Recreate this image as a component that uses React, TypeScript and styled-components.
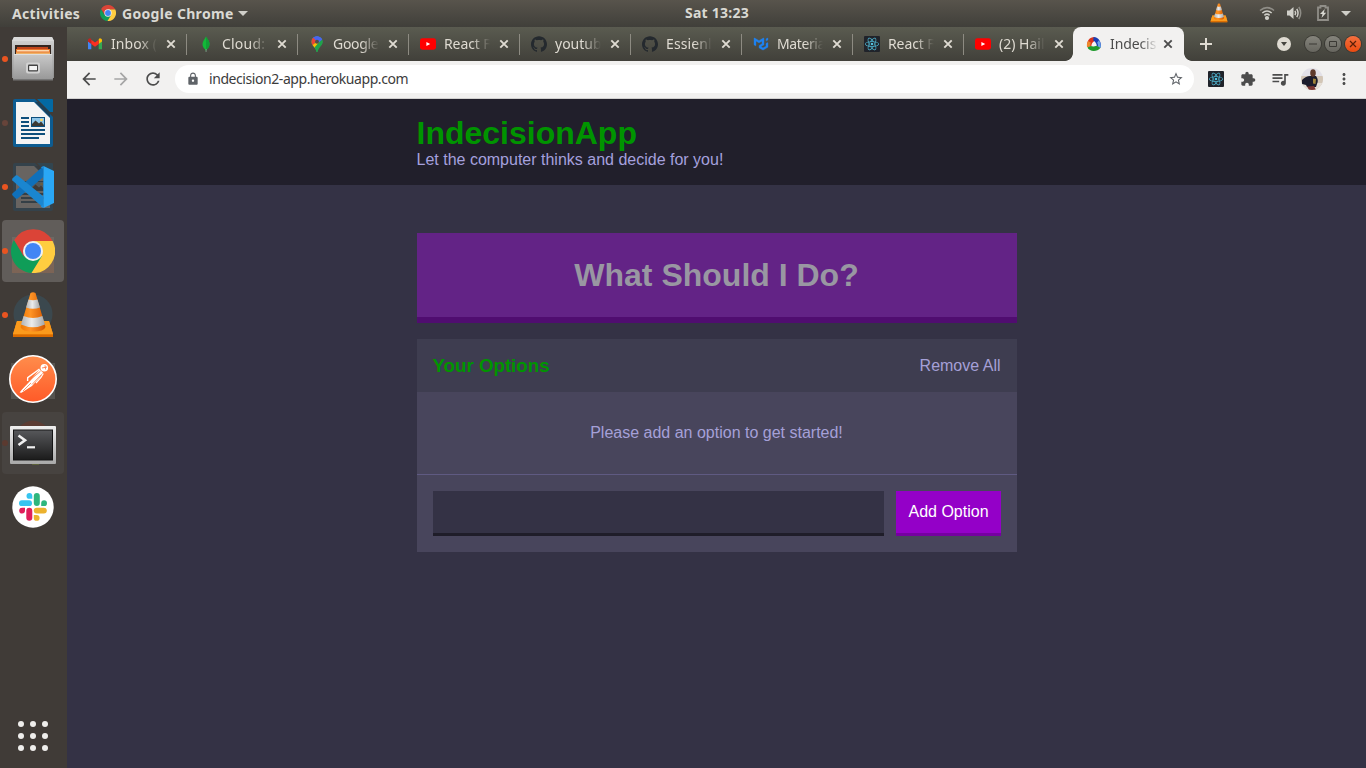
import React from "react";
import styled, { createGlobalStyle } from "styled-components";
import {
  MdArrowBack,
  MdArrowForward,
  MdRefresh,
  MdLock,
  MdStarBorder,
  MdExtension,
  MdQueueMusic,
  MdMoreVert,
} from "react-icons/md";
import { SiMui, SiGithub, SiReact } from "react-icons/si";

const GlobalStyle = createGlobalStyle`
  * { box-sizing: border-box; }
  html, body { margin: 0; padding: 0; }
  body { overflow: hidden; background: #403b37; }
  svg { display: block; flex: none; }
`;

const uiFont = `"Noto Sans", "Open Sans", sans-serif`;
const pageFont = `"Liberation Sans", Arial, sans-serif`;

const Desktop = styled.div`
  width: 1366px;
  height: 768px;
  display: flex;
  flex-direction: column;
  background: #403b37;
  font-family: ${uiFont};
`;

/* ---------- system bar ---------- */

const TopBar = styled.header`
  flex: none;
  height: 27px;
  display: grid;
  grid-template-columns: 600px 234px 1fr;
  align-items: center;
  background: linear-gradient(#58544c, #403f3a);
  color: #dad9d3;
  font-size: 14px;
  font-weight: 700;
`;

const TopGroup = styled.div`
  display: flex;
  align-items: center;
  height: 27px;
  padding-bottom: 1px;
  white-space: nowrap;
`;

const TopLeft = styled(TopGroup)`
  padding-left: 12px;
`;

const TopClock = styled(TopGroup)`
  justify-content: center;
  padding-bottom: 2px;
  letter-spacing: 0.25px;
`;

const TopRight = styled(TopGroup)`
  justify-content: flex-end;
  padding-right: 15px;
`;

const TopLabel = styled.span<{ $w: number }>`
  width: ${(p) => p.$w}px;
  letter-spacing: 0.32px;
`;

const Spacer = styled.span<{ $w: number }>`
  flex: none;
  width: ${(p) => p.$w}px;
`;

const Caret = styled.span`
  border-left: 5px solid transparent;
  border-right: 5px solid transparent;
  border-top: 5px solid #d0cfc9;
`;

/* ---------- dock ---------- */

const Body = styled.div`
  flex: 1;
  min-height: 0;
  display: flex;
`;

const Dock = styled.nav`
  flex: none;
  width: 67px;
  padding: 1px 3px 17px 2px;
  display: flex;
  flex-direction: column;
  gap: 2px;
  background: #403b37;
`;

const DockItem = styled.div<{ $bg?: string; $dot?: string }>`
  position: relative;
  flex: none;
  width: 62px;
  height: 62px;
  border-radius: 4px;
  display: flex;
  align-items: center;
  justify-content: center;
  background: ${(p) => p.$bg ?? "transparent"};
  &::before {
    content: "";
    position: absolute;
    left: 0;
    top: 28px;
    width: 6px;
    height: 6px;
    border-radius: 50%;
    background: ${(p) => p.$dot ?? "transparent"};
  }
  svg { position: relative; }
`;

const AppGrid = styled.div`
  margin: auto 0 0 16px;
  display: grid;
  grid-template-columns: repeat(3, 6px);
  gap: 6px;
`;

const GridDot = styled.i`
  height: 6px;
  border-radius: 50%;
  background: #efeeec;
`;

/* ---------- browser ---------- */

const Browser = styled.main`
  flex: 1;
  min-width: 0;
  display: flex;
  flex-direction: column;
`;

const TabStrip = styled.div`
  flex: none;
  height: 34px;
  padding: 0 5px 0 9px;
  display: flex;
  align-items: center;
  background: linear-gradient(#5a5b50, #41403a);
`;

const Tab = styled.div`
  flex: none;
  position: relative;
  width: 111px;
  height: 34px;
  padding: 0 8px 0 11px;
  display: flex;
  align-items: center;
  color: #dfdbd2;
  &::after {
    content: "";
    position: absolute;
    right: 0;
    top: 7px;
    width: 1px;
    height: 21px;
    background: #8d8b82;
  }
  &.last::after { display: none; }
`;

const ActiveTab = styled(Tab)`
  margin-left: -2px;
  padding-left: 13px;
  background: #f2f1f0;
  color: #4c4c4c;
  border-radius: 8px 8px 0 0;
  &::before {
    content: "";
    position: absolute;
    left: -8px;
    bottom: 0;
    width: 8px;
    height: 8px;
    background: radial-gradient(circle at 0 0, transparent 7.5px, #f2f1f0 8.2px);
  }
  &::after {
    right: -8px;
    top: auto;
    bottom: 0;
    width: 8px;
    height: 8px;
    background: radial-gradient(circle at 100% 0, transparent 7.5px, #f2f1f0 8.2px);
  }
`;

const TabTitle = styled.span<{ $w: number; $ls: number; $gap?: number }>`
  flex: none;
  width: ${(p) => p.$w}px;
  margin: 0 ${(p) => p.$gap ?? 6}px 0 8px;
  overflow: hidden;
  white-space: nowrap;
  font-size: 14px;
  line-height: 20px;
  letter-spacing: ${(p) => p.$ls}px;
  mask-image: linear-gradient(90deg, #000 calc(100% - 18px), transparent);
`;

const WindowButton = styled.span<{ $close?: boolean }>`
  flex: none;
  width: 16px;
  height: 16px;
  margin-left: 4px;
  border-radius: 50%;
  display: flex;
  align-items: center;
  justify-content: center;
  background: ${(p) =>
    p.$close ? "linear-gradient(#f4703f, #ec4a0f)" : "linear-gradient(#85847c, #67665f)"};
  box-shadow: 0 0 0 1px #3a3934;
`;

const TabSearch = styled.span`
  margin-left: auto;
  margin-right: 10px;
  width: 14px;
  height: 14px;
  border-radius: 50%;
  display: flex;
  align-items: center;
  justify-content: center;
  background: #dfdbd2;
  &::after {
    content: "";
    border-left: 3px solid transparent;
    border-right: 3px solid transparent;
    border-top: 4px solid #45443e;
  }
`;

const NewTab = styled.span`
  margin-left: 15px;
`;

const Toolbar = styled.div`
  flex: none;
  height: 38px;
  padding: 0 12px 1px 12px;
  display: flex;
  align-items: center;
  background: #f2f1f0;
  border-bottom: 1px solid #d2d1d0;
  color: #4c4c4c;
`;

const NavIcons = styled.div`
  flex: none;
  display: flex;
  gap: 12px;
  width: 96px;
  svg:nth-child(2) { color: #a5a5a5; }
`;

const Omnibox = styled.div`
  flex: none;
  width: 1019px;
  height: 28px;
  padding: 0 10px 0 11px;
  border-radius: 14px;
  display: flex;
  align-items: center;
  background: #fff;
  color: #5f6368;
`;

const Url = styled.span`
  flex: 1;
  margin-left: 9px;
  font-size: 14px;
  line-height: 20px;
  letter-spacing: -0.43px;
  color: #3c3c3c;
`;

const Extensions = styled.div`
  flex: none;
  display: flex;
  align-items: center;
  margin-left: 14px;
`;

const ReactTile = styled.span`
  flex: none;
  width: 16px;
  height: 16px;
  border-radius: 1px;
  display: flex;
  align-items: center;
  justify-content: center;
  background: #20232a;
  color: #53c1de;
`;

/* ---------- page ---------- */

const Page = styled.section`
  flex: 1;
  background: #343245;
  font-family: ${pageFont};
  font-size: 16px;
  line-height: 18px;
  color: #a5a0d8;
`;

const Container = styled.div`
  width: 600px;
  margin: 0 auto;
`;

const PageHeader = styled.div`
  height: 86px;
  padding: 16px 0;
  margin-bottom: 48px;
  background: #211f2b;
  color: #a5a0de;
`;

const Title = styled.h1`
  margin: 0;
  font-size: 32px;
  line-height: 36px;
  color: #009400;
`;

const Subtitle = styled.h2`
  margin: 0;
  font-size: 16px;
  font-weight: 400;
  line-height: 18px;
`;

const BigButton = styled.button`
  display: block;
  width: 100%;
  height: 90px;
  margin: 0 0 16px;
  padding: 24px;
  border: none;
  border-bottom: 6px solid #500d70;
  background: #632386;
  color: #9997a2;
  font: 700 32px/36px ${pageFont};
`;

const Widget = styled.div`
  background: #48455c;
`;

const WidgetHeader = styled.div`
  height: 53px;
  padding: 0 16px;
  display: flex;
  align-items: center;
  justify-content: space-between;
  background: #3e3d50;
`;

const WidgetTitle = styled.h3`
  margin: 0;
  font-size: 18.72px;
  line-height: 21px;
  color: #009400;
`;

const LinkButton = styled.button`
  padding: 0;
  border: none;
  background: none;
  color: #a5a0d8;
  font: 16px/18px ${pageFont};
`;

const Message = styled.p`
  margin: 0;
  padding: 32px 0;
  border-bottom: 1px solid #5f5a82;
  text-align: center;
`;

const Form = styled.form`
  display: flex;
  gap: 12px;
  padding: 16px;
`;

const Field = styled.input`
  flex: 1;
  min-width: 0;
  height: 45px;
  border: none;
  border-bottom: 3px solid #1f1d29;
  border-radius: 0;
  background: #343245;
`;

const AddButton = styled.button`
  flex: none;
  width: 105px;
  height: 45px;
  padding: 0 0 1px 1px;
  border: none;
  border-bottom: 3px solid #7500a0;
  background: #9400c8;
  color: #fff;
  font: 16px/18px ${pageFont};
  white-space: nowrap;
`;

/* ---------- drawings ---------- */

const ChromeLogo = ({ size }: { size: number }) => (
  <svg width={size} height={size} viewBox="0 0 44 44">
    <path d="M22 22 12.5 27.5 2.95 11A22 22 0 0 0 20.5 44L31.5 27.5Z" fill="#0f9d58" />
    <path d="M22 12H41.6A22 22 0 0 1 20.5 44L30.8 27.3Z" fill="#ffcd40" />
    <path d="M3.2 11A22 22 0 0 1 41.6 12H22L12.8 27Z" fill="#db4437" />
    <circle cx="22" cy="22" r="10" fill="#f1f1f1" />
    <circle cx="22" cy="22" r="8" fill="#4285f4" />
  </svg>
);

const ChromeDockIcon = styled.div`
  position: relative;
  display: flex;
  background: linear-gradient(#6e6963, #7d6455) center bottom / 42px 36px no-repeat;
`;

const Cone = ({ size, ghost }: { size: number; ghost?: boolean }) => (
  <svg width={size} height={size} viewBox="0 0 48 48">
    <defs>
      <linearGradient id={`cone${size}`}>
        <stop offset="0" stopColor="#f07800" />
        <stop offset=".4" stopColor="#ff9426" />
        <stop offset="1" stopColor="#d05500" />
      </linearGradient>
      <linearGradient id={`band${size}`}>
        <stop offset="0" stopColor="#b0b2b3" />
        <stop offset=".45" stopColor="#ececec" />
        <stop offset="1" stopColor="#a3a5a6" />
      </linearGradient>
    </defs>
    {ghost && <circle cx="24" cy="23" r="19.5" fill="#3b484e" />}
    <path d="M8 30H40L44 43V46H4V43Z" fill="#f58a0b" />
    <path d="M8 30H40L44 43H4Z" fill="#fb9a1c" />
    <path d="M4 43.5H44V46H4Z" fill="#d96a00" />
    <path d="M21.5 2Q24 .4 26.5 2L36.5 36Q35 40.5 24 40.5T11.5 36Z" fill={`url(#cone${size})`} />
    <path d="M19.5 8.5Q24 10 28.5 8.5L31 16.6Q24 19 17 16.6Z" fill={`url(#band${size})`} />
    <path d="M14.6 25Q24 29 33.4 25L36 33.5Q24 39 12 33.5Z" fill={`url(#band${size})`} />
  </svg>
);

const FilesIcon = () => (
  <svg width="48" height="48" viewBox="0 0 48 48">
    <defs>
      <linearGradient id="cab" x2="0" y2="1">
        <stop offset="0" stopColor="#d5d5d5" />
        <stop offset="1" stopColor="#8f8f8f" />
      </linearGradient>
      <linearGradient id="drawer" x2="0" y2="1">
        <stop offset="0" stopColor="#c9c9c9" />
        <stop offset="1" stopColor="#979797" />
      </linearGradient>
    </defs>
    <path d="M5 2H43L45 6V43H3V6Z" fill="url(#cab)" />
    <path d="M5 2H43L45 6H3Z" fill="#dadada" />
    <path d="M6 10H42V22H6Z" fill="#35261f" />
    <path d="M8 12H39V16H8Z" fill="#c0451a" />
    <path d="M7 14H41V19H7Z" fill="#e8742a" />
    <path d="M8 15.2H40V16.4H8Z" fill="#fff0d0" />
    <path d="M7 17.5H41V19H7Z" fill="#f0b268" />
    <path d="M5 19H43L44 45H4Z" fill="url(#drawer)" />
    <path d="M5 19H43V20H5Z" fill="#dedede" />
    <path d="M4 44H44V45.5H4Z" fill="#777" />
    <rect x="17" y="27.5" width="14" height="11" rx="2" fill="#d2d2d2" />
    <rect x="19" y="29.5" width="10" height="7" rx="1" fill="#444" />
    <rect x="20.2" y="31" width="7.8" height="4.2" fill="#f4f4f4" />
  </svg>
);

const WriterShape = () => (
  <>
    <path d="M6 0H26L44 18V46Q44 48 42 48H6Q4 48 4 46V2Q4 0 6 0Z" fill="#0d5c91" />
    <path d="M28 0H43Q44 0 44 1V13H41Z" fill="#0369a3" />
    <path d="M7 3H25L41 19V45H7Z" fill="#f4f4f4" />
    <path d="M26 3 41 18V14L30 3Z" fill="#1d3f57" />
    <g fill="#0d4f7c">
      <path d="M12 18H20V20H12ZM12 22H20V24H12ZM12 26H20V28H12ZM12 30H36V32H12ZM12 34H36V36H12ZM12 38H30V40H12Z" />
      <path d="M22 18H36V28H22Z" />
    </g>
    <path d="M23 19H35V27H23Z" fill="#8fc6e8" />
    <path d="M23 27V25L26.5 21.5 30 24.5 32 22.5 35 26V27Z" fill="#3d3a34" />
    <circle cx="32.5" cy="21" r="1.3" fill="#ffd75e" />
  </>
);

const WriterIcon = () => (
  <svg width="48" height="48" viewBox="0 0 48 48">
    <WriterShape />
  </svg>
);

const CodeIcon = () => (
  <svg width="48" height="48" viewBox="0 0 48 48">
    <g opacity=".22">
      <WriterShape />
    </g>
    <path d="M3.4 30.6 34.5 3V14L8.6 35.6Q7.4 36.2 6.6 35.4L3.4 32.2Q2.8 31.4 3.4 30.6Z" fill="#0f70ba" />
    <path d="M3.4 17.4Q2.8 16.4 3.4 15.6L6.6 12.6Q7.5 12 8.6 12.6L34.5 33.5V45Z" fill="#1a86d0" />
    <path d="M34.5 3 45 8V40L34.5 45Z" fill="#2aa7f5" />
    <path d="M34.5 3V45L31.5 43.4Q34 43 34 41V6.5Q34 4.8 31.5 4.6Z" fill="#1d8fe0" />
  </svg>
);

const PostmanIcon = () => (
  <svg width="48" height="48" viewBox="0 0 48 48">
    <defs>
      <linearGradient id="pm" x2="0" y2="1">
        <stop offset="0" stopColor="#ff8d4c" />
        <stop offset="1" stopColor="#ff5a28" />
      </linearGradient>
    </defs>
    <path d="M2 8H46V44H2Z" fill="#56534f" />
    <circle cx="24" cy="24" r="23.2" fill="url(#pm)" stroke="#fff" strokeWidth="1.6" />
    <circle cx="35.3" cy="12.7" r="3.8" fill="#fff" />
    <path d="M33 13 38 12M36 10.3 36.6 14.5" stroke="#ff6c37" strokeWidth=".8" />
    <path d="M30.5 14.5 34 17.5 31 22 23 31 12.5 37.8 10.6 37.4 13 34.5 21.5 25.5Z" fill="#fff" />
    <path d="M30.5 14 18.7 22.6 18.6 26" stroke="#fff" strokeWidth="1.4" fill="none" />
    <path d="M34.3 18.5 32 22.5 27 28" stroke="#fff" strokeWidth="1.2" fill="none" />
    <path d="M20.5 25.5 31.5 16.2M23 29.5 32.5 19.5M14 36 22 28" stroke="#ff7840" strokeWidth=".8" />
  </svg>
);

const TerminalIcon = () => (
  <svg width="48" height="48" viewBox="0 0 48 48">
    <defs>
      <linearGradient id="tm" x2="0" y2="1">
        <stop offset="0" stopColor="#56575a" />
        <stop offset="1" stopColor="#1c1c1c" />
      </linearGradient>
      <linearGradient id="tf" x2="0" y2="1">
        <stop offset="0" stopColor="#efefef" />
        <stop offset="1" stopColor="#a9a9a9" />
      </linearGradient>
    </defs>
    <path d="M10 8Q24-5 38 8Z" fill="#5c3c33" />
    <path d="M23 44H30V46H23Z" fill="#5b6138" />
    <rect x="1" y="7" width="46" height="38" rx="1" fill="url(#tf)" />
    <rect x="4" y="10.5" width="40" height="31" fill="#151515" />
    <rect x="5" y="11.5" width="38" height="29" fill="url(#tm)" />
    <path d="M9.5 16.5 16 21.2 9.5 26" fill="none" stroke="#f0f0f0" strokeWidth="2.6" />
    <path d="M18 27.2H26V29.4H18Z" fill="#f0f0f0" />
  </svg>
);

const SlackIcon = () => (
  <svg width="48" height="48" viewBox="0 0 48 48">
    <circle cx="24" cy="24" r="20.7" fill="#fff" />
    <g fill="#36c5f0">
      <rect x="10" y="17.3" width="13" height="5.8" rx="2.9" />
      <path d="M23.3 15.8H20.4A2.9 2.9 0 1 1 23.3 12.9Z" />
    </g>
    <g fill="#2eb67d">
      <rect x="24.8" y="10" width="6" height="13" rx="3" />
      <path d="M32.2 23.1V20.2A2.9 2.9 0 1 1 35.1 23.1Z" />
    </g>
    <g fill="#ecb22e">
      <rect x="24.8" y="24.7" width="13" height="5.8" rx="2.9" />
      <path d="M24.8 32H27.7A2.9 2.9 0 1 1 24.8 34.9Z" />
    </g>
    <g fill="#e01e5a">
      <rect x="17.3" y="24.7" width="6" height="13" rx="3" />
      <path d="M16 24.7V27.6A2.9 2.9 0 1 1 13 24.7Z" />
    </g>
  </svg>
);

const GmailIcon = () => (
  <svg width="16" height="16" viewBox="0 0 16 16">
    <path d="M1 5V13.2H4.3V7.5L1 5Z" fill="#4285f4" />
    <path d="M11.7 7.5V13.2H15V5Z" fill="#34a853" />
    <path d="M1 5.4V4A1.7 1.7 0 0 1 4.3 3.5V8Z" fill="#c5221f" />
    <path d="M15 5.4V4A1.7 1.7 0 0 0 11.7 3.5V8Z" fill="#fbbc04" />
    <path d="M4.3 3.8 8 6.6 11.7 3.8V7.9L8 10.7 4.3 7.9Z" fill="#ff2d20" />
  </svg>
);

const LeafIcon = () => (
  <svg width="16" height="16" viewBox="0 0 16 16">
    <path d="M8 .5C9 3 11.5 4.5 11.5 8.3C11.5 11 9.8 12.6 8.3 13.7L8 16 7.6 13.7C6 12.5 4.5 10.8 4.5 8.3C4.5 4.8 7 3 8 .5Z" fill="#13b838" />
    <path d="M8 .5C9 3 11.5 4.5 11.5 8.3C11.5 11 9.8 12.6 8.3 13.7H8Z" fill="#10a035" />
    <path d="M7.8 13H8.3V16H7.8Z" fill="#b8c4c2" />
  </svg>
);

const PinIcon = () => (
  <svg width="16" height="16" viewBox="0 0 16 16">
    <defs>
      <clipPath id="pin">
        <path d="M8 .2A5.6 5.6 0 0 1 13.6 5.8C13.6 9.5 9.6 10.8 8.7 15.2Q8 16.6 7.3 15.2C6.4 10.8 2.4 9.5 2.4 5.8A5.6 5.6 0 0 1 8 .2Z" />
      </clipPath>
    </defs>
    <g clipPath="url(#pin)">
      <path d="M0 0H16V16H0Z" fill="#34a853" />
      <path d="M0 0H16V1L8 6 4 3Z" fill="#4267f0" />
      <path d="M4 1.2 8 5 3 10 0 8V2Z" fill="#ea4335" />
      <path d="M8 5.5 2.5 10 6 13 12 6Z" fill="#fbbc04" />
      <path d="M13 3 4.5 12.5 8 17 16 8Z" fill="#1ea34c" />
      <path d="M4 1 8-1 14 3 9 7Z" fill="#4a64ef" />
    </g>
    <circle cx="8" cy="5.8" r="2" fill="#4f4e48" />
  </svg>
);

const YoutubeIcon = () => (
  <svg width="16" height="16" viewBox="0 0 16 16">
    <rect x="0" y="2.3" width="16" height="11.4" rx="2.4" fill="#f00" />
    <path d="M6.4 5.9 10.2 8 6.4 10.1Z" fill="#fff" />
  </svg>
);

const WheelIcon = () => (
  <svg width="16" height="16" viewBox="0 0 16 16">
    <path d="M8.5 1C3.5 1 .5 5 1 11L5.4 10.2Q5.4 6.5 8.5 5Z" fill="#d9341c" />
    <path d="M2 5Q.6 7.5 1 11L4.4 10Q4.2 8 4.8 6.4Z" fill="#f08a2c" />
    <path d="M7.6 1C13 1.5 15.5 6 15 11.5L10.8 10.6Q10.8 6.5 7.2 4.6Z" fill="#1a3fb4" />
    <path d="M13 4.2Q15.4 7 15 11.5L12 10.8Q12.2 8.7 11.2 6.6Z" fill="#6aa2e8" />
    <path d="M1.4 11.6C3.5 15.8 11 16.5 14.5 11.8L10.5 9.7Q7.5 11 4.8 10Z" fill="#1f9a2b" />
    <path d="M8 5.8 10.3 10H5.7Z" fill="#f4f2f6" />
  </svg>
);

const CloseIcon = () => (
  <svg width="16" height="16" viewBox="0 0 16 16" stroke="currentColor" strokeWidth="1.9">
    <path d="M4.3 4.3 11.7 11.7M11.7 4.3 4.3 11.7" />
  </svg>
);

const Avatar = () => (
  <svg width="22" height="22" viewBox="0 0 22 22">
    <defs>
      <clipPath id="av">
        <circle cx="11" cy="11" r="11" />
      </clipPath>
    </defs>
    <g clipPath="url(#av)">
      <path d="M0 0H22V22H0Z" fill="#e3e1e8" />
      <path d="M0 8H22V22H0Z" fill="#d3c6b6" />
      <path d="M0 15H22V22H0Z" fill="#e6e0d8" />
      <path d="M1 12Q5 8 9 8L15 8Q18 12 16 16L15 19H6L5 17 1 16Z" fill="#1c1c2c" />
      <path d="M12 10.5 15 11 14.5 16 12 15.5Z" fill="#a0843a" />
      <path d="M6 18.5 13 18 15 22H8Z" fill="#7a3632" />
      <ellipse cx="12" cy="5" rx="2.8" ry="3.8" fill="#5f3a2c" />
    </g>
  </svg>
);

const WifiIcon = () => (
  <svg width="16" height="16" viewBox="0 0 16 16" fill="none" stroke="#d0cfc9" strokeWidth="1.6">
    <path d="M1 5.5Q8-.2 15 5.5" stroke="#8f8d87" />
    <path d="M3.3 8Q8 4 12.7 8" />
    <path d="M5.4 10.3Q8 8.1 10.6 10.3" />
    <circle cx="8" cy="13" r="1.3" fill="#d0cfc9" />
  </svg>
);

const VolumeIcon = () => (
  <svg width="16" height="16" viewBox="0 0 16 16" fill="none" stroke="#d0cfc9" strokeWidth="1.5">
    <path d="M1 5.5H3.5L7.5 2V14L3.5 10.5H1Z" fill="#d0cfc9" stroke="none" />
    <path d="M9 5.8Q10.4 8 9 10.2M10.8 3.8Q13.3 8 10.8 12.2" />
    <path d="M12.8 2Q16.6 8 12.8 14" stroke="#8f8d87" />
  </svg>
);

const BatteryIcon = () => (
  <svg width="12" height="16" viewBox="0 0 12 16">
    <path d="M1 2.5H3.5V1H8.5V2.5H11V15H1Z" fill="none" stroke="#908e88" strokeWidth="1.8" />
    <path d="M7.8 4 3 9H5.5L4.5 13 9.2 7.8H6.8Z" fill="#dad9d3" />
  </svg>
);

const MuiIcon = styled(SiMui)`
  margin: 1px;
  color: #1f82f0;
  stroke: #1f82f0;
  stroke-width: 0.6px;
  overflow: visible;
`;

const tabs: { title: string; icon: React.ReactNode; ls?: number }[] = [
  { title: "Inbox (", icon: <GmailIcon />, ls: 0.1 },
  { title: "Cloud: ", icon: <LeafIcon />, ls: 0.2 },
  { title: "Google", icon: <PinIcon />, ls: -0.3 },
  { title: "React F", icon: <YoutubeIcon />, ls: -0.1 },
  { title: "youtub", icon: <SiGithub size={16} color="#24292e" /> },
  { title: "Essienl", icon: <SiGithub size={16} color="#24292e" />, ls: 0.1 },
  { title: "Materia", icon: <MuiIcon size={14} />, ls: -0.4 },
  { title: "React F", icon: <ReactTile><SiReact size={14} /></ReactTile>, ls: -0.1 },
  { title: "(2) Hail", icon: <YoutubeIcon /> },
];

export default function App() {
  return (
    <Desktop>
      <GlobalStyle />
      <TopBar>
        <TopLeft>
          <TopLabel $w={88}>Activities</TopLabel>
          <ChromeLogo size={16} />
          <Spacer $w={6} />
          <TopLabel $w={116}>Google Chrome</TopLabel>
          <Caret />
        </TopLeft>
        <TopClock>Sat 13:23</TopClock>
        <TopRight>
          <Cone size={20} />
          <Spacer $w={30} />
          <WifiIcon />
          <Spacer $w={11} />
          <VolumeIcon />
          <Spacer $w={15} />
          <BatteryIcon />
          <Spacer $w={12} />
          <Caret />
        </TopRight>
      </TopBar>
      <Body>
        <Dock>
          <DockItem $dot="#e95420"><FilesIcon /></DockItem>
          <DockItem $dot="#67443a"><WriterIcon /></DockItem>
          <DockItem $dot="#e95420"><CodeIcon /></DockItem>
          <DockItem $bg="#615d5a" $dot="#e95420">
            <ChromeDockIcon><ChromeLogo size={44} /></ChromeDockIcon>
          </DockItem>
          <DockItem $dot="#e95420"><Cone size={48} ghost /></DockItem>
          <DockItem><PostmanIcon /></DockItem>
          <DockItem $bg="#474340" $dot="#5b3a30"><TerminalIcon /></DockItem>
          <DockItem><SlackIcon /></DockItem>
          <AppGrid>
            {Array.from({ length: 9 }, (_, i) => <GridDot key={i} />)}
          </AppGrid>
        </Dock>
        <Browser>
          <TabStrip>
            {tabs.map((t, i) => (
              <Tab key={i} className={i === tabs.length - 1 ? "last" : undefined}>
                {t.icon}
                <TabTitle $w={46} $ls={t.ls ?? 0}>{t.title}</TabTitle>
                <CloseIcon />
              </Tab>
            ))}
            <ActiveTab>
              <WheelIcon />
              <TabTitle $w={48} $gap={2} $ls={-0.1}>Indecis</TabTitle>
              <CloseIcon />
            </ActiveTab>
            <NewTab>
              <svg width="14" height="14" viewBox="0 0 14 14" stroke="#dfdbd2" strokeWidth="2">
                <path d="M7 1V13M1 7H13" />
              </svg>
            </NewTab>
            <TabSearch />
            <WindowButton>
              <svg width="8" height="8" viewBox="0 0 8 8"><path d="M0 4H8" stroke="#3a3934" /></svg>
            </WindowButton>
            <WindowButton>
              <svg width="8" height="8" viewBox="0 0 8 8">
                <path d="M.5 1.5H7.5V6.5H.5Z" fill="none" stroke="#3a3934" />
              </svg>
            </WindowButton>
            <WindowButton $close>
              <svg width="8" height="8" viewBox="0 0 8 8">
                <path d="M1 1 7 7M7 1 1 7" stroke="#5a1f08" strokeWidth="1.2" />
              </svg>
            </WindowButton>
          </TabStrip>
          <Toolbar>
            <NavIcons>
              <MdArrowBack size={20} />
              <MdArrowForward size={20} />
              <MdRefresh size={20} />
            </NavIcons>
            <Omnibox>
              <MdLock size={14} />
              <Url>indecision2-app.herokuapp.com</Url>
              <MdStarBorder size={16} />
            </Omnibox>
            <Extensions>
              <ReactTile><SiReact size={14} /></ReactTile>
              <Spacer $w={16} />
              <MdExtension size={16} />
              <Spacer $w={14} />
              <MdQueueMusic size={20} />
              <Spacer $w={11} />
              <Avatar />
              <Spacer $w={12} />
              <MdMoreVert size={18} />
            </Extensions>
          </Toolbar>
          <Page>
            <PageHeader>
              <Container>
                <Title>IndecisionApp</Title>
                <Subtitle>Let the computer thinks and decide for you!</Subtitle>
              </Container>
            </PageHeader>
            <Container>
              <BigButton>What Should I Do?</BigButton>
              <Widget>
                <WidgetHeader>
                  <WidgetTitle>Your Options</WidgetTitle>
                  <LinkButton>Remove All</LinkButton>
                </WidgetHeader>
                <Message>Please add an option to get started!</Message>
                <Form>
                  <Field type="text" />
                  <AddButton type="button">Add Option</AddButton>
                </Form>
              </Widget>
            </Container>
          </Page>
        </Browser>
      </Body>
    </Desktop>
  );
}
